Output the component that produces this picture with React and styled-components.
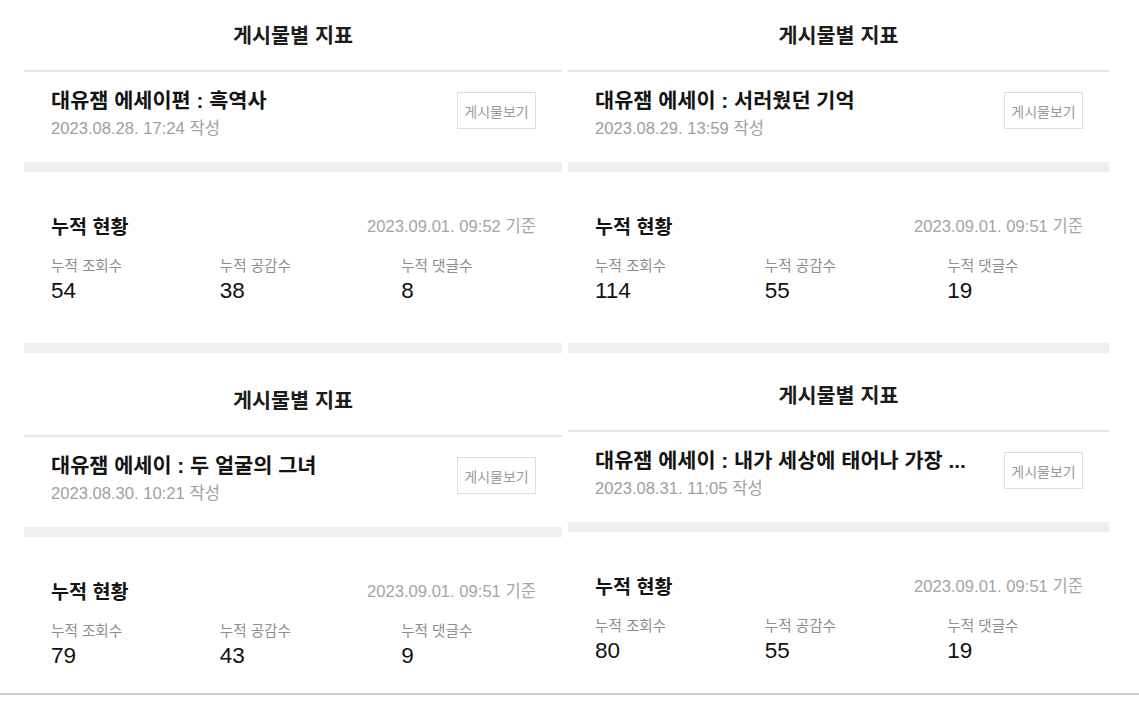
import React from "react";
import styled, { createGlobalStyle } from "styled-components";

const GlobalStyle = createGlobalStyle`
  html, body { margin: 0; padding: 0; background: #fff; }
  body { font-family: "Liberation Sans", "Noto Sans CJK KR", sans-serif; color: #111; }
  * { box-sizing: border-box; }
`;

const Page = styled.div`
  width: 1139px;
  height: 709px;
  background: #fff;
  overflow: hidden;
`;

const Columns = styled.div`
  display: grid;
  grid-template-columns: 538px 541px;
  column-gap: 6px;
  margin-left: 24px;
  align-items: start;
`;

const Column = styled.div`
  display: flex;
  flex-direction: column;
  gap: ${(p) => p.$gap}px;
`;

const Panel = styled.section`
  display: flex;
  flex-direction: column;
`;

const PanelHeader = styled.h2`
  margin: 0;
  height: 72px;
  padding-bottom: 2px;
  display: flex;
  align-items: center;
  justify-content: center;
  font-size: 20.7px;
  font-weight: 700;
  color: #1c1c1c;
  border-bottom: 2px solid #e6e6e6;
`;

const PostRow = styled.div`
  display: flex;
  justify-content: space-between;
  align-items: flex-start;
  padding: 16px 26px 23px 27px;
`;

const PostInfo = styled.div`
  display: flex;
  flex-direction: column;
  min-width: 0;
`;

const PostTitle = styled.div`
  font-size: 20.8px;
  line-height: 26px;
  font-weight: 700;
  color: #141414;
  white-space: nowrap;
`;

const PostDate = styled.div`
  margin-top: 5px;
  font-size: 16.6px;
  line-height: 20px;
  color: #a0a0a0;
`;

const ViewButton = styled.button`
  margin-top: 4px;
  width: 79px;
  height: 37px;
  flex-shrink: 0;
  padding: 0;
  border: 1px solid #dedede;
  background: #fff;
  font-family: inherit;
  font-size: 14px;
  color: #9a9a9a;
`;

const Band = styled.div`
  height: 10px;
  background: #efefef;
`;

const Stats = styled.div`
  padding: 40px 26px ${(p) => p.$bottom}px 27px;
`;

const StatsHead = styled.div`
  display: flex;
  justify-content: space-between;
  align-items: center;
  height: 26px;
`;

const StatsTitle = styled.h3`
  margin: 0;
  font-size: 19.6px;
  font-weight: 700;
  color: #141414;
`;

const StatsDate = styled.span`
  font-size: 16.6px;
  color: #a5a5a5;
`;

const MetricGrid = styled.div`
  margin-top: 19px;
  display: grid;
  grid-template-columns: 34.8% 37.4% 1fr;
`;

const Metric = styled.div`
  display: flex;
  flex-direction: column;
`;

const MetricLabel = styled.span`
  font-size: 14.6px;
  line-height: 18px;
  color: #8e8e8e;
`;

const MetricValue = styled.span`
  margin-top: 3px;
  font-size: 22.5px;
  line-height: 26px;
  color: #111;
`;

const Divider = styled.div`
  height: 2px;
  background: #cbcbcb;
`;

const posts = {
  left: [
    {
      title: "대유잼 에세이편 : 흑역사",
      date: "2023.08.28. 17:24 작성",
      base: "2023.09.01. 09:52 기준",
      views: 54,
      likes: 38,
      comments: 8,
    },
    {
      title: "대유잼 에세이 : 두 얼굴의 그녀",
      date: "2023.08.30. 10:21 작성",
      base: "2023.09.01. 09:51 기준",
      views: 79,
      likes: 43,
      comments: 9,
    },
  ],
  right: [
    {
      title: "대유잼 에세이 : 서러웠던 기억",
      date: "2023.08.29. 13:59 작성",
      base: "2023.09.01. 09:51 기준",
      views: 114,
      likes: 55,
      comments: 19,
    },
    {
      title: "대유잼 에세이 : 내가 세상에 태어나 가장 ...",
      date: "2023.08.31. 11:05 작성",
      base: "2023.09.01. 09:51 기준",
      views: 80,
      likes: 55,
      comments: 19,
    },
  ],
};

function PostPanel({ post, last }) {
  return (
    <Panel>
      <PanelHeader>게시물별 지표</PanelHeader>
      <PostRow>
        <PostInfo>
          <PostTitle>{post.title}</PostTitle>
          <PostDate>{post.date}</PostDate>
        </PostInfo>
        <ViewButton type="button">게시물보기</ViewButton>
      </PostRow>
      <Band />
      <Stats $bottom={last ? 24 : 39}>
        <StatsHead>
          <StatsTitle>누적 현황</StatsTitle>
          <StatsDate>{post.base}</StatsDate>
        </StatsHead>
        <MetricGrid>
          <Metric>
            <MetricLabel>누적 조회수</MetricLabel>
            <MetricValue>{post.views}</MetricValue>
          </Metric>
          <Metric>
            <MetricLabel>누적 공감수</MetricLabel>
            <MetricValue>{post.likes}</MetricValue>
          </Metric>
          <Metric>
            <MetricLabel>누적 댓글수</MetricLabel>
            <MetricValue>{post.comments}</MetricValue>
          </Metric>
        </MetricGrid>
      </Stats>
      {!last && <Band />}
    </Panel>
  );
}

export default function App() {
  return (
    <Page>
      <GlobalStyle />
      <Columns>
        <Column $gap={12}>
          {posts.left.map((p, i) => (
            <PostPanel key={i} post={p} last={i === posts.left.length - 1} />
          ))}
        </Column>
        <Column $gap={7}>
          {posts.right.map((p, i) => (
            <PostPanel key={i} post={p} last={i === posts.right.length - 1} />
          ))}
        </Column>
      </Columns>
      <Divider />
    </Page>
  );
}
